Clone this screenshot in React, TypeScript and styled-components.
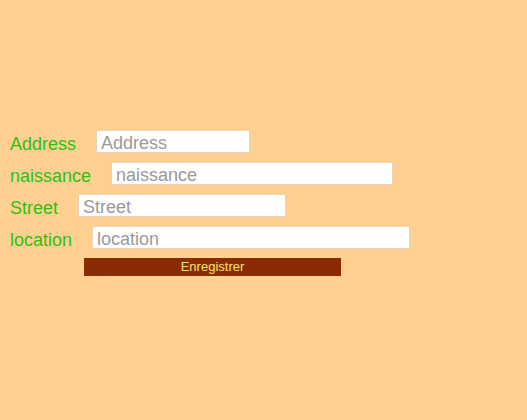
import React from "react";
import styled, { createGlobalStyle } from "styled-components";

const Global = createGlobalStyle`
  html, body { margin: 0; padding: 0; background: #ffd08f; }
  body { font-family: "Liberation Sans", Arial, sans-serif; }
`;

const Form = styled.form`
  display: flex;
  flex-direction: column;
  align-items: flex-start;
  gap: 9px;
  padding: 130px 0 0 10px;
`;

const Row = styled.div`
  display: flex;
  align-items: center;
  gap: 20px;
  height: 23px;
`;

const Label = styled.label`
  font-size: 18px;
  color: #2fbf14;
  line-height: 23px;
  margin-top: 5px;
`;

const Input = styled.input<{ $w: number }>`
  box-sizing: border-box;
  width: ${(p) => p.$w}px;
  height: 23px;
  margin: 0;
  padding: 4px 4px 0;
  border: 1px solid #e6d3b8;
  background: #fff;
  font-family: "Liberation Sans", Arial, sans-serif;
  font-size: 18px;
  line-height: 18px;
  outline: none;
  &::placeholder { color: #9a9a9a; }
`;

const Button = styled.button`
  box-sizing: border-box;
  margin-left: 74px;
  width: 257px;
  height: 18px;
  padding: 0;
  border: none;
  background: #8b2b04;
  color: #f3e56c;
  font-family: "Liberation Sans", Arial, sans-serif;
  font-size: 13px;
  line-height: 18px;
`;

const fields = [
  { name: "Address", w: 154 },
  { name: "naissance", w: 282 },
  { name: "Street", w: 208 },
  { name: "location", w: 318 },
];

export default function App() {
  return (
    <>
      <Global />
      <Form onSubmit={(e) => e.preventDefault()}>
        {fields.map((f) => (
          <Row key={f.name}>
            <Label>{f.name}</Label>
            <Input $w={f.w} placeholder={f.name} />
          </Row>
        ))}
        <Button type="submit">Enregistrer</Button>
      </Form>
    </>
  );
}
